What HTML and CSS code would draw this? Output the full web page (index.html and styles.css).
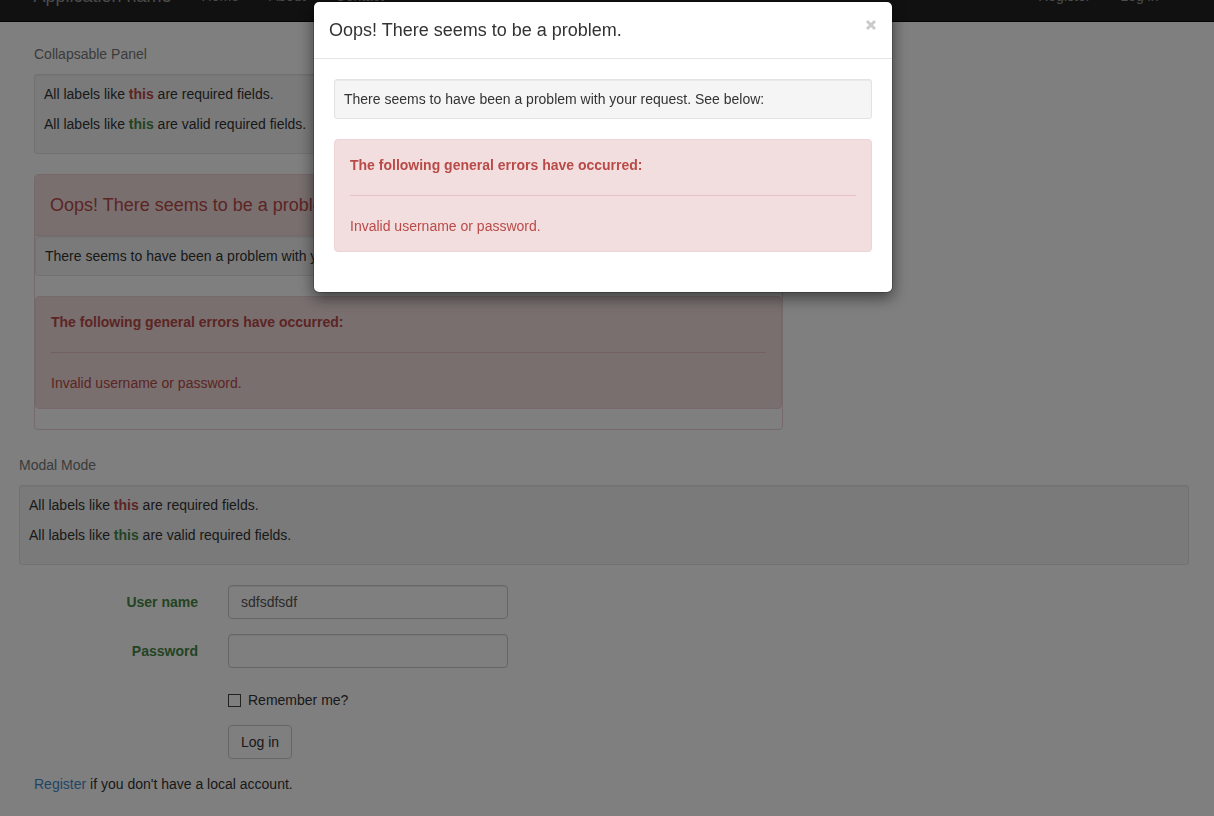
FILE: index.html
```html
<!DOCTYPE html>
<html lang="en">
<head>
<meta charset="utf-8">
<meta name="viewport" content="width=device-width, initial-scale=1">
<title>Log in</title>
<link rel="stylesheet" href="styles.css">
</head>
<body>
<header class="navbar">
  <nav class="container navbar-inner">
    <a class="brand" href="#">Application name</a>
    <ul class="nav">
      <li><a href="#">Home</a></li>
      <li><a href="#">About</a></li>
      <li><a href="#">Contact</a></li>
    </ul>
    <ul class="nav nav-right">
      <li><a href="#">Register</a></li>
      <li><a href="#">Log in</a></li>
    </ul>
  </nav>
</header>
<div class="page">
  <main class="container">
    <section class="collapsable">
      <p class="mode">Collapsable Panel</p>
      <div class="well">
        <p>All labels like <strong class="required">this</strong> are required fields.</p>
        <p>All labels like <strong class="valid">this</strong> are valid required fields.</p>
      </div>
      <div class="panel">
        <h4 class="panel-title">Oops! There seems to be a problem.</h4>
        <div class="well">There seems to have been a problem with your request. See below:</div>
        <div class="alert">
          <strong>The following general errors have occurred:</strong>
          <hr>
          <p>Invalid username or password.</p>
        </div>
      </div>
    </section>
    <section class="modal-mode">
      <p class="mode">Modal Mode</p>
      <div class="well">
        <p>All labels like <strong class="required">this</strong> are required fields.</p>
        <p>All labels like <strong class="valid">this</strong> are valid required fields.</p>
      </div>
      <form class="login">
        <label class="field-label" for="user">User name</label>
        <input class="field" id="user" type="text" value="sdfsdfsdf">
        <label class="field-label" for="password">Password</label>
        <input class="field" id="password" type="password">
        <div class="remember">
          <input class="check" id="remember" type="checkbox">
          <label for="remember">Remember me?</label>
        </div>
        <button class="button" type="submit">Log in</button>
      </form>
      <p class="register"><a href="#">Register</a> if you don't have a local account.</p>
    </section>
  </main>
</div>
<div class="backdrop">
  <div class="modal" role="dialog" aria-modal="true" aria-labelledby="modal-title">
    <div class="modal-header">
      <h4 class="modal-title" id="modal-title">Oops! There seems to be a problem.</h4>
      <button class="close" type="button" aria-label="Close">
        <svg width="12" height="12" viewBox="0 0 12 12" aria-hidden="true"><path d="M2 2l8 8M10 2l-8 8"/></svg>
      </button>
    </div>
    <div class="modal-body">
      <div class="well">There seems to have been a problem with your request. See below:</div>
      <div class="alert">
        <strong>The following general errors have occurred:</strong>
        <hr>
        <p>Invalid username or password.</p>
      </div>
    </div>
  </div>
</div>
</body>
</html>
```

FILE: styles.css
```css
* {
  box-sizing: border-box;
}

body {
  margin: 0;
  overflow: hidden;
  background: #fff;
  color: #333;
  font: 14px/20px "Liberation Sans", Arial, sans-serif;
}

p, h4, ul {
  margin: 0;
  padding: 0;
}

a {
  color: #428bca;
  text-decoration: none;
}

input, button {
  font: inherit;
}

.container {
  width: 100%;
  max-width: 1170px;
  margin: 0 auto;
}

.navbar {
  display: flex;
  align-items: flex-end;
  height: 22px;
  padding-right: 7px;
  background: #222;
  border-bottom: 1px solid #080808;
}

.navbar-inner {
  display: flex;
  padding: 0 15px;
}

.navbar a {
  display: block;
  padding: 15px;
  color: #999;
}

.navbar .brand {
  padding-left: 0;
  font-size: 18px;
}

.nav {
  display: flex;
  list-style: none;
}

.nav-right {
  margin-left: auto;
}

.page {
  padding-right: 6px;
}

.collapsable {
  max-width: 779px;
  padding: 22px 15px 0;
}

.mode {
  margin-bottom: 10px;
  color: #777;
}

.well {
  margin-bottom: 20px;
  padding: 9px;
  background: #f5f5f5;
  border: 1px solid #e3e3e3;
  border-radius: 3px;
  box-shadow: inset 0 1px 1px rgba(0, 0, 0, 0.05);
}

.well p {
  margin-bottom: 10px;
}

.required {
  color: #b94a48;
}

.valid {
  color: #468847;
}

.panel {
  border: 1px solid #eed3d7;
  border-radius: 4px;
}

.panel-title {
  padding: 20px 15px;
  background: #f2dede;
  border-bottom: 1px solid #eed3d7;
  color: #b94a48;
  font-size: 18px;
  font-weight: 500;
}

.alert {
  margin-bottom: 20px;
  padding: 15px;
  background: #f2dede;
  border: 1px solid #eed3d7;
  border-radius: 4px;
  color: #b94a48;
}

.alert strong {
  display: block;
}

.alert hr {
  margin: 20px 0;
  border: 0;
  border-top: 1px solid #e6c1c7;
}

.modal-mode {
  padding-top: 25px;
}

.login {
  display: grid;
  grid-template-columns: 179px minmax(0, 280px);
  column-gap: 30px;
  row-gap: 15px;
}

.field-label {
  padding-top: 7px;
  color: #468847;
  font-weight: bold;
  text-align: right;
}

.field {
  width: 100%;
  height: 34px;
  padding: 6px 12px;
  background: #fff;
  border: 1px solid #ccc;
  border-radius: 4px;
  box-shadow: inset 0 1px 1px rgba(0, 0, 0, 0.075);
  color: #555;
}

.remember {
  grid-column: 2;
  display: flex;
  align-items: center;
  gap: 7px;
  padding-top: 7px;
}

.check {
  appearance: none;
  width: 13px;
  height: 13px;
  margin: 0;
  background: #fff;
  border: 1px solid #444;
}

.button {
  grid-column: 2;
  justify-self: start;
  padding: 6px 12px;
  background: #fff;
  border: 1px solid #ccc;
  border-radius: 4px;
  color: #333;
}

.register {
  padding: 15px 15px 0;
}

.backdrop {
  position: fixed;
  inset: 0;
  padding: 1px 8px 0 0;
  background: rgba(0, 0, 0, 0.5);
}

.modal {
  width: 100%;
  max-width: 580px;
  margin: 0 auto;
  background: #fff;
  background-clip: padding-box;
  border: 1px solid rgba(0, 0, 0, 0.2);
  border-radius: 6px;
  box-shadow: 0 5px 15px rgba(0, 0, 0, 0.5);
}

.modal-header {
  display: flex;
  align-items: flex-start;
  justify-content: space-between;
  padding: 15px;
  border-bottom: 1px solid #e5e5e5;
}

.modal-title {
  font-size: 18px;
  font-weight: 500;
  line-height: 26px;
}

.close {
  display: flex;
  padding: 2px 0;
  background: none;
  border: 0;
  opacity: 0.2;
}

.close path {
  fill: none;
  stroke: #000;
  stroke-width: 3;
}

.modal-body {
  padding: 20px;
}
```
